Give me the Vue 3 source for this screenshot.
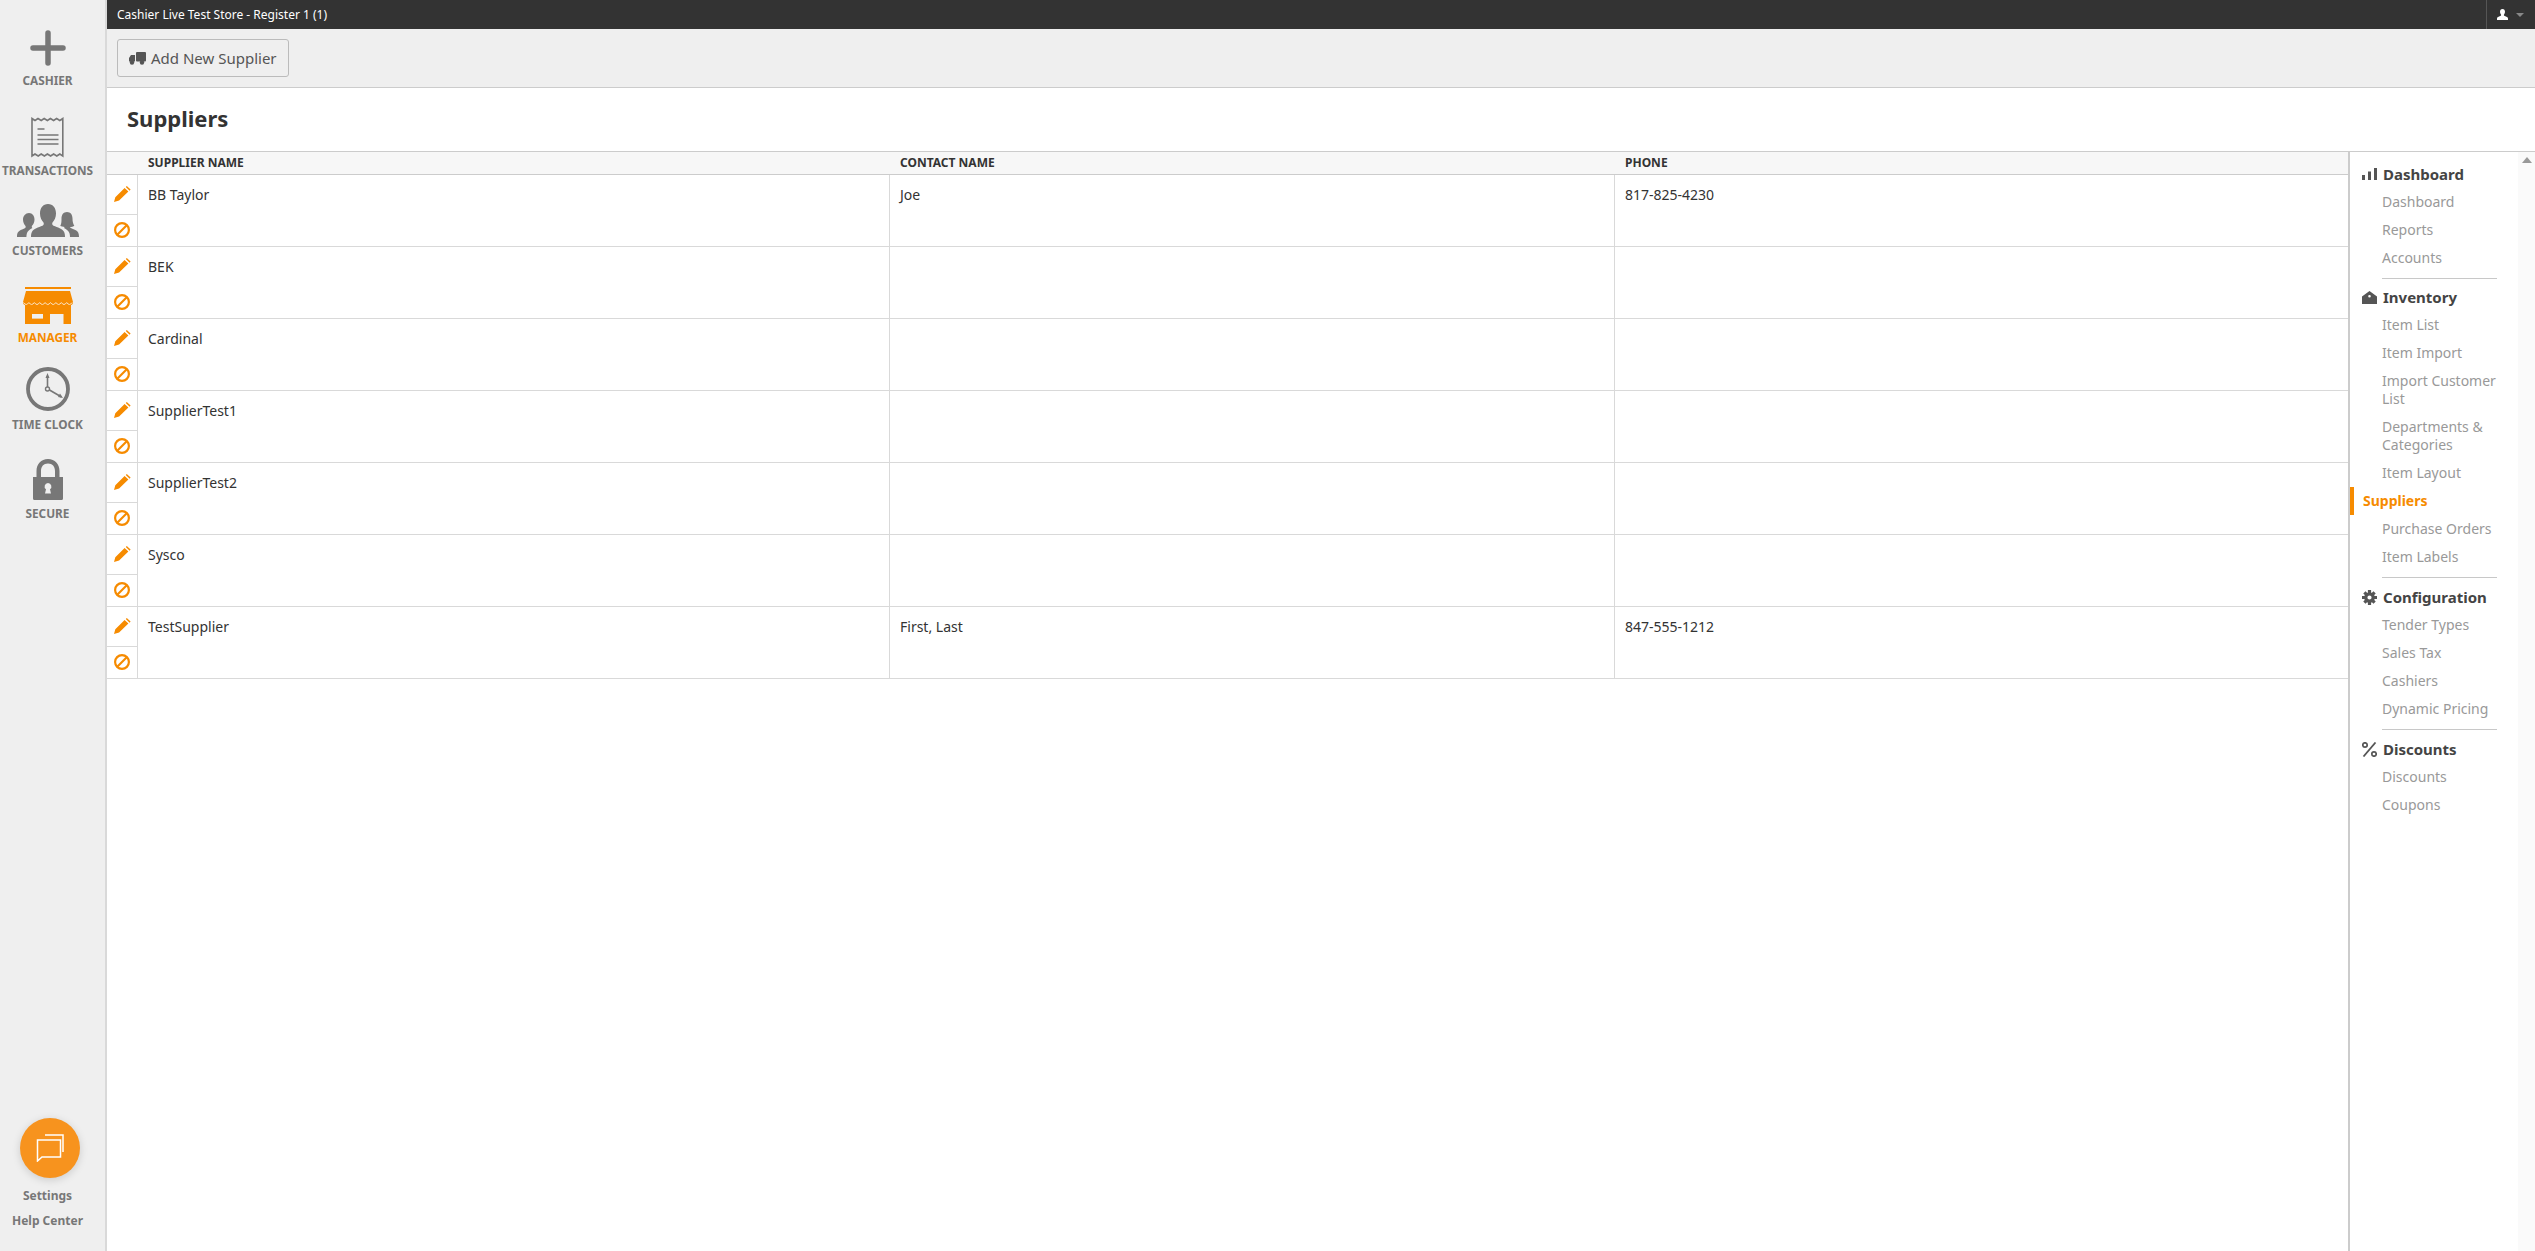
<script setup>
const rows = [
  { name: 'BB Taylor', contact: 'Joe', phone: '817-825-4230' },
  { name: 'BEK', contact: '', phone: '' },
  { name: 'Cardinal', contact: '', phone: '' },
  { name: 'SupplierTest1', contact: '', phone: '' },
  { name: 'SupplierTest2', contact: '', phone: '' },
  { name: 'Sysco', contact: '', phone: '' },
  { name: 'TestSupplier', contact: 'First, Last', phone: '847-555-1212' },
]
const groups = [
  { title: 'Dashboard', icon: 'bars', items: [['Dashboard'], ['Reports'], ['Accounts']] },
  { title: 'Inventory', icon: 'tag', items: [['Item List'], ['Item Import'], ['Import Customer List'], ['Departments & Categories'], ['Item Layout'], ['Suppliers', true], ['Purchase Orders'], ['Item Labels']] },
  { title: 'Configuration', icon: 'gear', items: [['Tender Types'], ['Sales Tax'], ['Cashiers'], ['Dynamic Pricing']] },
  { title: 'Discounts', icon: 'pct', items: [['Discounts'], ['Coupons']] },
]
</script>

<template>
  <div class="app">
    <aside class="side">
      <a class="mod mod-cashier">
        <svg width="36" height="36" viewBox="0 0 36 36"><path d="M18 3v30M3 18h30" stroke="#777" stroke-width="5.5" stroke-linecap="round" fill="none"/></svg>
        <span>CASHIER</span>
      </a>
      <a class="mod mod-trans">
        <svg width="34" height="41" viewBox="0 0 34 41" fill="none" stroke="#777">
          <path stroke-width="1.6" d="M1 1.5l3 2 3-2 3.2 2 3-2 3.2 2 3-2 3.2 2 3-2 3.2 2 3-2V39l-3-2-3 2-3.2-2-3 2-3.2-2-3 2-3.2-2-3 2-3.2-2L1 39z"/>
          <path stroke-width="1.6" d="M6.5 12h7M6.5 18h21M6.5 22.500h21M6.5 27h21"/>
        </svg>
        <span>TRANSACTIONS</span>
      </a>
      <a class="mod mod-cust">
        <svg width="62" height="33" viewBox="0 0 62 33" fill="#777">
          <path d="M31 0c5 0 8 4 8 9.500 0 4-1.600 7-3.500 9-.6 1.200-.4 2.500 1 3.200 4 1.700 9 3 10.500 6 .8 1.700 1 3.300 1 5.300H14c0-2 .2-3.600 1-5.300 1.500-3 6.500-4.300 10.500-6 1.400-.7 1.600-2 1-3.200-1.900-2-3.500-5-3.500-9C23 4 26 0 31 0z"/>
          <path d="M12 9c3.500 0 5.500 3 5.500 6.500 0 3-1.200 5-2.500 6.300-.4.900-.2 1.700.4 2.200-2.500 1.300-4.600 2.800-5.400 5-.4 1.300-.6 2.500-.6 4H0c0-2 .1-3.200.8-4.500 1.100-2.200 4.300-3 7-4.300 1-.5 1.100-1.400.7-2.300-1.300-1.400-2.500-3.300-2.500-6.400C6 12 8.500 9 12 9z"/>
          <path d="M50 8c3.500 0 5.500 2.800 5.500 6.500 0 3 .6 5.500 1.800 7.200-.8.800-2.800 1.200-4.500 1.400.6.900 1.400 1.300 3.200 2 2.500 1 4.500 1.800 5.300 3.600.5 1.100.7 2.600.7 4.300H53c0-1.500-.2-2.700-.6-4-.8-2.200-2.900-3.700-5.400-5 .3-.3.500-.6.600-1-1.700-.2-3.500-.6-4.300-1.300C44.500 20 44.500 17.500 44.500 14.500 44.500 10.800 46.500 8 50 8z"/>
        </svg>
        <span>CUSTOMERS</span>
      </a>
      <a class="mod mod-mgr">
        <svg width="50" height="37" viewBox="0 0 50 37">
          <rect x="2" y="0" width="46" height="2" fill="#f68b00"/>
          <path fill="#f68b00" d="M3 4h44l3 11c0 2-1 3-2 3v19H2V18c-1 0-2-1-2-3z"/>
          <path fill="none" stroke="#fbe3c4" stroke-width="1" d="M.5 15.500q2.700 4 5.400 0q2.700 4 5.400 0q2.700 4 5.400 0q2.700 4 5.400 0q2.700 4 5.400 0q2.700 4 5.400 0q2.700 4 5.400 0q2.700 4 5.400 0q2.700 4 5.400 0"/>
          <rect x="9" y="27" width="11" height="4.600" fill="#efefef"/>
          <rect x="27" y="27" width="13.500" height="10" fill="#efefef"/>
        </svg>
        <span>MANAGER</span>
      </a>
      <a class="mod mod-clock">
        <svg width="44" height="44" viewBox="0 0 44 44" fill="none" stroke="#777">
          <circle cx="22" cy="22" r="20" stroke-width="3.800"/>
          <path stroke-width="1.600" d="M21.500 20V9M23.500 23l12 7"/>
          <path fill="#777" stroke="none" d="M21.500 6l2 5h-4zM37 31l-5-1 2-3.500z"/>
          <circle cx="21.500" cy="22" r="2" stroke-width="1.400"/>
        </svg>
        <span>TIME CLOCK</span>
      </a>
      <a class="mod mod-lock">
        <svg width="30" height="41" viewBox="0 0 30 41" fill="#777">
          <path fill-rule="evenodd" d="M15 0c7 0 11.500 5 11.500 12v6H30v21.500a1.500 1.500 0 0 1-1.500 1.500h-27A1.500 1.500 0 0 1 0 39.500V18h3.500v-6C3.500 5 8 0 15 0zm0 4.500c-4.500 0-7 3-7 7.500v6h14v-6c0-4.500-2.500-7.500-7-7.500zM15 24a3.500 3.500 0 0 0-2 6.300L12 34.500h6l-1-4.200A3.500 3.500 0 0 0 15 24z"/>
        </svg>
        <span>SECURE</span>
      </a>
      <div class="side-bottom">
        <div class="chat">
          <svg width="28" height="28" viewBox="0 0 28 28" fill="none" stroke="#fff" stroke-width="1.500">
            <path d="M9 1h18v17"/>
            <path d="M1.500 6h23v17H6l-4.500 4z" fill="#f7931e"/>
          </svg>
        </div>
        <a class="bot-link">Settings</a>
        <a class="bot-link">Help Center</a>
      </div>
    </aside>

    <div class="main">
      <header class="topbar">
        <span class="store">Cashier Live Test Store - Register 1 (1)</span>
        <div class="user">
          <svg width="11" height="11" viewBox="0 0 11 11" fill="#fff"><path d="M5.500 0C7.200 0 8 1.200 8 2.800 8 4 7.500 5 7 5.500c-.3.800 0 1.300.8 1.600 1.500.6 3.200 1 3.200 2.400V11H0V9.500c0-1.400 1.700-1.800 3.200-2.400.8-.3 1.100-.8.800-1.600C3.500 5 3 4 3 2.800 3 1.200 3.800 0 5.500 0z"/></svg>
          <i class="caret"></i>
        </div>
      </header>
      <div class="toolbar">
        <button class="btn">
          <svg width="17" height="13" viewBox="0 0 17 13" fill="#555">
            <rect x="7" y="0" width="10" height="9.500" rx="1"/>
            <path d="M2 3h4v6.500H0V6z"/>
            <circle cx="3" cy="10.500" r="2.200"/>
            <circle cx="13" cy="10.500" r="2.200"/>
          </svg>
          Add New Supplier
        </button>
      </div>
      <h1 class="title">Suppliers</h1>
      <div class="content">
        <section class="list">
          <div class="thead">
            <div class="th-act"></div>
            <div class="th">SUPPLIER NAME</div>
            <div class="th">CONTACT NAME</div>
            <div class="th">PHONE</div>
          </div>
          <div v-for="r in rows" :key="r.name" class="tr">
            <div class="actions">
              <div class="act act-edit">
                <svg width="17" height="16" viewBox="0 0 17 16" fill="#f68b00"><path d="M0 16l1.300-4.800L10.600 2l3.800 3.600-9.300 9zM11.800 1l1-1 3.800 3.500-1 1.200z"/></svg>
              </div>
              <div class="act act-ban">
                <svg width="16" height="16" viewBox="0 0 16 16" fill="none" stroke="#f68b00" stroke-width="2.200"><circle cx="8" cy="8" r="6.900"/><path d="M3 13L13 3"/></svg>
              </div>
            </div>
            <div class="td">{{ r.name }}</div>
            <div class="td">{{ r.contact }}</div>
            <div class="td">{{ r.phone }}</div>
          </div>
        </section>
        <nav class="nav">
          <i class="up"></i>
          <div v-for="(g, i) in groups" :key="g.title" class="group">
            <hr v-if="i" class="sep" />
            <div class="head">
              <svg v-if="g.icon === 'bars'" width="15" height="12" viewBox="0 0 15 12" fill="#555"><rect x="0" y="7" width="3" height="5"/><rect x="6" y="3.500" width="3" height="8.500"/><rect x="12" y="0" width="3" height="12"/></svg>
              <svg v-else-if="g.icon === 'tag'" width="15" height="13" viewBox="0 0 15 13" fill="#555"><path fill-rule="evenodd" d="M7.500 0L15 5.500V13H0V5.500zM7.500 4a1.300 1.300 0 1 0 0 2.600 1.300 1.300 0 0 0 0-2.600z"/></svg>
              <svg v-else-if="g.icon === 'gear'" width="15" height="15" viewBox="0 0 15 15" fill="none" stroke="#555"><circle cx="7.500" cy="7.500" r="3.700" stroke-width="3.200"/><path stroke-width="3.200" d="M7.500 0v3M7.500 12v3M0 7.500h3M12 7.500h3M2.400 2.400l2 2M10.600 10.600l2 2M2.400 12.600l2-2M10.600 4.400l2-2"/></svg>
              <svg v-else width="15" height="15" viewBox="0 0 15 15" fill="none" stroke="#555" stroke-width="1.700"><circle cx="3" cy="3" r="2.200"/><circle cx="12" cy="12" r="2.200"/><path d="M1.500 14.500L13.500.5" stroke-width="1.800"/></svg>
              <span>{{ g.title }}</span>
            </div>
            <a v-for="it in g.items" :key="it[0]" class="item" :class="{ active: it[1] }">{{ it[0] }}</a>
          </div>
        </nav>
      </div>
    </div>
  </div>
</template>

<style>
html, body { margin: 0; background: #fff; }
</style>

<style scoped>
.app {
  display: flex;
  height: 100vh;
  overflow: hidden;
  font-family: "Noto Sans", sans-serif;
  color: #333;
}
.side {
  width: 107px;
  flex: none;
  box-sizing: border-box;
  padding-right: 10px;
  display: flex;
  flex-direction: column;
  align-items: center;
  background: #efefef;
  border-right: 2px solid #d9d9d9;
}
.mod {
  display: flex;
  flex-direction: column;
  align-items: center;
  font-size: 11.8px;
  line-height: 16px;
  font-weight: 700;
  color: #777;
  width: 100%;
  white-space: nowrap;
}
.mod svg { display: block; }
.mod-cashier { padding-top: 30px; }
.mod-cashier span { margin-top: 6px; }
.mod-trans { padding-top: 29px; }
.mod-trans span { margin-top: 4px; }
.mod-cust { padding-top: 26px; }
.mod-cust span { margin-top: 5px; }
.mod-mgr { padding-top: 29px; color: #f68b00; }
.mod-mgr span { margin-top: 5px; }
.mod-clock { padding-top: 22px; }
.mod-clock span { margin-top: 5px; }
.mod-lock { padding-top: 27px; }
.mod-lock span { margin-top: 5px; }
.side-bottom {
  margin-top: auto;
  padding-bottom: 18px;
  display: flex;
  flex-direction: column;
  align-items: center;
  width: 100%;
}
.chat {
  width: 60px;
  height: 60px;
  border-radius: 50%;
  background: #f7931e;
  box-shadow: 0 2px 8px rgba(0, 0, 0, 0.15);
  display: flex;
  align-items: center;
  justify-content: center;
  margin: 0 0 5px 5px;
}
.bot-link {
  font-size: 12px;
  line-height: 25px;
  font-weight: 700;
  color: #777;
}
.main {
  flex: 1;
  min-width: 0;
  display: flex;
  flex-direction: column;
}
.topbar {
  height: 29px;
  flex: none;
  background: #333;
  color: #fff;
  display: flex;
  align-items: center;
  justify-content: space-between;
  padding-left: 10px;
  font-size: 12px;
}
.user {
  height: 100%;
  width: 49px;
  box-sizing: border-box;
  border-left: 1px solid #555;
  display: flex;
  align-items: center;
  padding-left: 10px;
  gap: 8px;
}
.caret {
  border: 4px solid transparent;
  border-top: 4px solid #888;
  border-bottom: 0;
  width: 0;
  height: 0;
}
.toolbar {
  height: 59px;
  flex: none;
  box-sizing: border-box;
  background: #efefef;
  border-bottom: 1px solid #ccc;
  padding: 10px 10px 0;
}
.btn {
  height: 38px;
  padding: 0 11px;
  display: flex;
  align-items: center;
  gap: 5px;
  background: #efefef;
  border: 1px solid #bbb;
  border-radius: 3px;
  font: 15px "Noto Sans", sans-serif;
  color: #555;
}
.title {
  margin: 0;
  height: 64px;
  flex: none;
  box-sizing: border-box;
  padding-left: 20px;
  font-size: 22px;
  line-height: 60px;
  font-weight: 700;
  color: #333;
  border-bottom: 1px solid #ccc;
}
.content {
  flex: 1;
  min-height: 0;
  display: flex;
}
.list { flex: 1; min-width: 0; }
.thead, .tr {
  display: grid;
  grid-template-columns: 30px 752px 725px 1fr;
}
.thead {
  height: 22px;
  background: #f7f7f7;
  border-bottom: 1px solid #ccc;
}
.th {
  padding-left: 11px;
  font-size: 12px;
  line-height: 21px;
  font-weight: 700;
  color: #333;
}
.tr {
  height: 72px;
  box-sizing: border-box;
  border-bottom: 1px solid #d9d9d9;
}
.actions {
  display: flex;
  flex-direction: column;
}
.act {
  flex: 1;
  display: flex;
  align-items: center;
  justify-content: center;
}
.act-ban { padding-bottom: 2px; }
.act-edit {
  flex: none;
  height: 40px;
  box-sizing: border-box;
  border-bottom: 1px solid #d9d9d9;
  padding-bottom: 2px;
}
.td {
  border-left: 1px solid #d9d9d9;
  padding: 10px 0 0 10px;
  font-size: 14px;
  line-height: 20px;
  color: #333;
}
.nav {
  position: relative;
  width: 187px;
  flex: none;
  box-sizing: border-box;
  padding-top: 8px;
  border-left: 2px solid #ccc;
  background: linear-gradient(to right, #fff 168px, #fafafa 168px);
}
.up {
  position: absolute;
  top: 5px;
  right: 3px;
  border: 5px solid transparent;
  border-bottom: 6px solid #999;
  border-top: 0;
}
.head {
  display: flex;
  align-items: center;
  height: 28px;
  padding-left: 12px;
  font-size: 15px;
  font-weight: 700;
  color: #444;
}
.head svg { width: 15px; margin-right: 6px; }
.item {
  display: block;
  padding: 5px 20px 5px 32px;
  font-size: 14px;
  line-height: 18px;
  color: #999;
}
.item.active {
  padding-left: 9px;
  border-left: 4px solid #f68b00;
  color: #f68b00;
  font-weight: 700;
}
.sep {
  margin: 6px 38px 5px 32px;
  height: 0;
  border: 0;
  border-top: 1px solid #c8c8c8;
}
.group:nth-child(3) .sep { margin-bottom: 4px; }
</style>
